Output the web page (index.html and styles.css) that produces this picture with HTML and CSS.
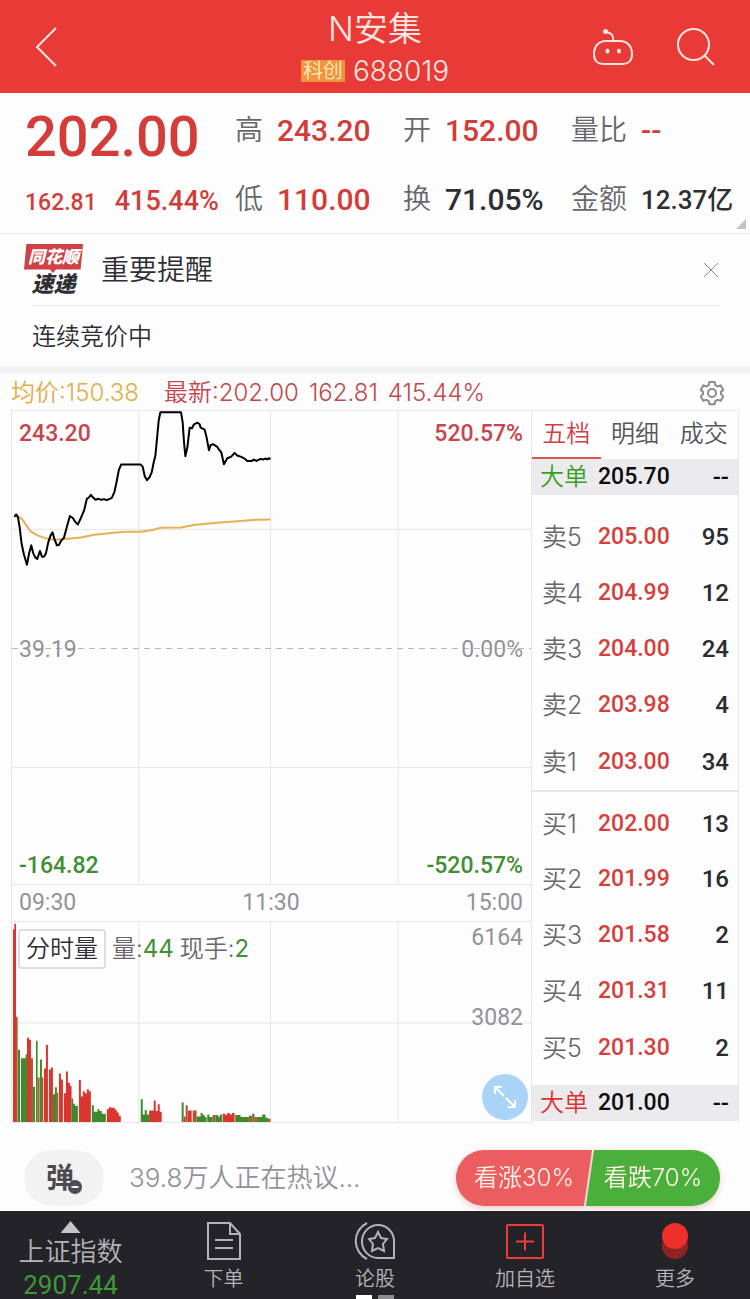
FILE: index.html
```html
<!DOCTYPE html>
<html lang="zh-CN">
<head>
<meta charset="utf-8">
<meta name="viewport" content="width=device-width, initial-scale=1">
<title>N安集 688019</title>
<link rel="stylesheet" href="styles.css">
</head>
<body>
<header class="topbar">
  <button class="icon-btn back" aria-label="返回">
    <svg width="24" height="42" viewBox="0 0 24 42"><path d="M22 2 3 21l19 19"/></svg>
  </button>
  <div class="heading">
    <h1>N安集</h1>
    <p class="code"><span class="board">科创</span>688019</p>
  </div>
  <div class="actions">
    <button class="icon-btn" aria-label="助手">
      <svg width="42" height="38" viewBox="0 0 42 38"><path d="M14 13h14c7 0 12 5 12 13 0 7-4 10-9 10H11c-5 0-9-3-9-10 0-8 5-13 12-13z"/><path d="M21 13c1-5-1-8-7-9"/><circle class="dot" cx="13.500" cy="3.500" r="2.500"/><ellipse class="dot" cx="15.500" cy="23" rx="2" ry="2.600"/><ellipse class="dot" cx="27" cy="23" rx="2" ry="2.600"/></svg>
    </button>
    <button class="icon-btn" aria-label="搜索">
      <svg width="40" height="40" viewBox="0 0 40 40"><circle cx="17.500" cy="17.500" r="15.500"/><path d="m28 28 10 10"/></svg>
    </button>
  </div>
</header>

<main>
  <section class="quote">
    <div class="last">
      <strong class="price">202.00</strong>
      <p class="change"><span>162.81</span><span class="pct">415.44%</span></p>
    </div>
    <dl class="stats">
      <div><dt>高</dt><dd class="up">243.20</dd></div>
      <div><dt>开</dt><dd class="up">152.00</dd></div>
      <div><dt>量比</dt><dd class="up">--</dd></div>
      <div><dt>低</dt><dd class="up">110.00</dd></div>
      <div><dt>换</dt><dd>71.05%</dd></div>
      <div><dt>金额</dt><dd class="amount">12.37亿</dd></div>
    </dl>
    <span class="corner"></span>
  </section>

  <section class="notice">
    <div class="notice-head">
      <div class="brand"><span class="brand-top">同花顺</span><span class="brand-bottom">速递</span></div>
      <h2>重要提醒</h2>
      <button class="icon-btn close" aria-label="关闭">
        <svg width="18" height="18" viewBox="0 0 18 18"><path d="m2 2 14 14M16 2 2 16"/></svg>
      </button>
    </div>
    <p class="notice-body">连续竞价中</p>
  </section>

  <section class="market">
    <div class="legend">
      <span class="avg">均价:150.38</span>
      <span class="latest">最新:202.00</span>
      <span class="latest">162.81</span>
      <span class="latest">415.44%</span>
      <button class="icon-btn gear" aria-label="设置">
        <svg width="26" height="26" viewBox="0 0 26 26"><path d="M10.500 2h5l.8 3 2.400 1.400 3-.9 2.500 4.300-2.200 2.200v2.200l2.200 2.200-2.500 4.300-3-.9-2.400 1.400-.8 3h-5l-.8-3-2.400-1.400-3 .9-2.500-4.300L4 14.200V12L1.800 9.800l2.500-4.300 3 .9L9.700 5z"/><circle cx="13" cy="13" r="4"/></svg>
      </button>
    </div>

    <div class="board-row">
      <div class="charts">
        <div class="plot price-plot">
          <svg viewBox="33 30 1560 1422" preserveAspectRatio="none" aria-hidden="true">
            <path class="grid" d="M414 30V1452M810 30V1452M1194 30V1452M33 386H1593M33 1102H1593"/>
            <path class="zero" d="M33 744H1593"/>
            <path class="avg-line" d="M40 344 52 346 64 356 76 374 90 393 110 404 135 413 160 417 195 415 240 410 280 402 340 396 370 393 420 393 455 388 480 381 540 380 580 373 640 367 720 361 770 357 810 356"/>
            <path class="price-line" d="M40 348 46 341 51 350 56 380 62 430 69 462 78 492 84 460 91 434 97 458 103 470 109 475 117 451 123 468 129 468 135 458 142 425 149 404 155 395 160 414 168 434 174 433 182 418 189 412 199 374 207 346 215 351 224 364 231 371 239 354 250 328 258 294 264 290 270 282 277 290 284 297 293 294 301 297 310 295 318 298 333 291 341 273 347 245 354 208 361 191H420L426 198 432 226 439 238 447 228 453 214 459 184 464 164 468 122 474 58 479 34H541L546 64 550 124 554 166 560 140 567 80 574 82 580 70 590 65 597 70 600 80 612 86 618 110 625 148 630 132 638 130 650 138 655 146 662 154 670 190 680 172 692 167 702 156 710 164 722 168 732 173 740 180 754 180 760 176 768 180 780 174 788 176 794 173 800 175 806 172 810 175"/>
          </svg>
          <div class="scale price-scale">
            <p class="rise"><span>243.20</span><span>520.57%</span></p>
            <p class="flat"><span>39.19</span><span>0.00%</span></p>
            <p class="fall"><span>-164.82</span><span>-520.57%</span></p>
          </div>
        </div>
        <p class="times"><span>09:30</span><span>11:30</span><span>15:00</span></p>
        <div class="plot volume-plot">
          <svg viewBox="33 213 1560 606" preserveAspectRatio="none" aria-hidden="true">
            <path class="grid" d="M414 213V819M810 213V819M1194 213V819M33 519H1593"/>
            <path class="bar-up" d="M36 819V235h4v-17h5V819zM78 819V564h6v6h6V819zM129 819V657h6v-71h6V819zM144 819v-159h6v-6h6V819zM174 819V672h6v18h6V819zM189 819v-87h6v-66h6v34h6v10h5V819zM234 819V692h6v50h6v-16h6v6h6v-12h6v6h6v93zM318 819v-39h6v-6h6v2h12v6h6v8h6v10h6v19zM445 819v-35h14v-30h6v32h6v-21h6v23h6v31zM549 819v-17h6v17zM561 819v-35h12v35zM666 819v-25h8v4h6v-6h8v4h6v-4h8v27zM803 819v-10h7v10z"/>
            <path class="bar-down" d="M51 819V600h6v219zM60 819V626h14v-12h4v205zM96 819V712h6v107zM105 819V573h5v246zM117 819V630h6v189zM156 819v-84h6v-21h6v105zM212 819v-71h5v16h5v6h9v49zM273 819v-51h6v20h11v-8h6v6h7v8h12v25zM420 819v-69h6v46h6v-13h6v13h7v23zM543 819v-59h6v59zM588 819v-17h12v-10h6v6h6v6h6v15zM620 819v-23h6v8h10v15zM644 819v-21h8v4h6v-6h6v23zM704 819v-21h16v6h25v15zM755 819v-25h7v25zM770 819v-15h15v-8h10v10h8v13z"/>
            <path class="bar-mixed" d="M45 819V500h5v319zM90 819V626h6v193zM110 819V684h6v135zM123 819V684h4v135zM168 819v-89h4v89zM555 819v-51h6v51zM576 819v-35h12v35zM636 819v-21h8v21zM745 819v-19h10v19zM762 819v-15h8v15z"/>
          </svg>
          <div class="scale volume-scale">
            <p><span>6164</span></p>
            <p><span>3082</span></p>
          </div>
          <div class="volume-info">
            <button class="indicator">分时量</button>
            <span>量:<b>44</b></span>
            <span>现手:<b>2</b></span>
          </div>
          <button class="expand" aria-label="全屏">
            <svg width="24" height="24" viewBox="0 0 24 24"><path d="M2 9V2h7M2 2l9 9M22 15v7h-7M22 22l-9-9"/></svg>
          </button>
        </div>
      </div>

      <aside class="depth">
        <div class="tabs" role="tablist">
          <button class="tab active" role="tab" aria-selected="true">五档</button>
          <button class="tab" role="tab" aria-selected="false">明细</button>
          <button class="tab" role="tab" aria-selected="false">成交</button>
        </div>
        <table class="orders">
          <tbody class="block"><tr><th class="green">大单</th><td>205.70</td><td>--</td></tr></tbody>
          <tbody class="asks">
            <tr><th>卖5</th><td>205.00</td><td>95</td></tr>
            <tr><th>卖4</th><td>204.99</td><td>12</td></tr>
            <tr><th>卖3</th><td>204.00</td><td>24</td></tr>
            <tr><th>卖2</th><td>203.98</td><td>4</td></tr>
            <tr><th>卖1</th><td>203.00</td><td>34</td></tr>
          </tbody>
          <tbody class="bids">
            <tr><th>买1</th><td>202.00</td><td>13</td></tr>
            <tr><th>买2</th><td>201.99</td><td>16</td></tr>
            <tr><th>买3</th><td>201.58</td><td>2</td></tr>
            <tr><th>买4</th><td>201.31</td><td>11</td></tr>
            <tr><th>买5</th><td>201.30</td><td>2</td></tr>
          </tbody>
          <tbody class="block"><tr><th class="red">大单</th><td>201.00</td><td>--</td></tr></tbody>
        </table>
      </aside>
    </div>
  </section>

  <section class="talk">
    <button class="barrage" aria-label="弹幕">弹<span class="minus"></span></button>
    <a class="topic" href="#talk">39.8万人正在热议...</a>
    <div class="vote">
      <button class="vote-up">看涨30%</button>
      <button class="vote-down">看跌70%</button>
    </div>
  </section>
</main>

<nav class="bottom-nav">
  <a class="index" href="#index"><span class="caret"></span><span class="index-name">上证指数</span><span class="index-value">2907.44</span></a>
  <a href="#order">
    <svg width="36" height="40" viewBox="0 0 36 40"><path d="M2 2h22l10 11v25H2zM24 2v11h10M9 19h18M9 27h18"/></svg>
    <span>下单</span>
  </a>
  <a href="#forum">
    <svg width="42" height="40" viewBox="0 0 42 40"><path d="M24 4a16 16 0 0 1 16 16v17H24a16 16.500 0 0 1 0-33zM13 2a20 20 0 0 0 0 36"/><path d="m24 11 3 6 6 1-4 5 1 7-6-3-6 3 1-7-4-5 6-1z"/></svg>
    <span>论股</span>
  </a>
  <a href="#add">
    <svg class="add" width="40" height="40" viewBox="0 0 40 40"><rect x="2" y="4" width="36" height="33" rx="1"/><path d="M11 20.500h18M20 11.500v18"/></svg>
    <span>加自选</span>
  </a>
  <a href="#more">
    <svg class="more" width="28" height="40" viewBox="0 0 28 40"><circle class="more-shade" cx="14" cy="25" r="13"/><circle class="more-top" cx="14" cy="15" r="13"/></svg>
    <span>更多</span>
  </a>
  <span class="pager"><i></i><i></i></span>
</nav>
</body>
</html>
```
FILE: styles.css
```css
* { box-sizing: border-box; margin: 0; padding: 0; }

:root {
  --din: Roboto, "Noto Sans CJK SC", sans-serif;
  --red: #d33c38;
  --green: #3f8f35;
  --line: #e6e6e8;
}

body {
  background: #fdfdfd;
  color: #2e2e33;
  font-family: Inter, "Noto Sans CJK SC", sans-serif;
  font-weight: 350;
  line-height: 1;
}

button { border: 0; background: none; color: inherit; font: inherit; cursor: pointer; }
a { color: inherit; text-decoration: none; }
svg { display: block; fill: none; stroke: currentColor; stroke-width: 2; }

.icon-btn { display: flex; align-items: center; justify-content: center; }

/* Title bar */
.topbar {
  display: grid;
  grid-template-columns: 1fr auto 1fr;
  align-items: center;
  height: 93px;
  padding: 0 34px;
  background: #e83b38;
  color: #ffe6e0;
}
.back { justify-self: start; }
.heading { display: flex; flex-direction: column; align-items: center; gap: 8px; }
.heading h1 { font-size: 34px; line-height: 40px; font-weight: 350; }
.code { display: flex; align-items: center; gap: 8px; font-size: 28px; line-height: 28px; }
.board { padding: 0 2px; background: #f4933c; color: #ffeec4; font-size: 20px; line-height: 22px; }
.actions { display: flex; align-items: center; justify-self: end; gap: 42px; }
.dot { fill: currentColor; stroke: none; }

/* Quote summary */
.quote {
  position: relative;
  display: flex;
  height: 141px;
  padding: 10px 0 10px 25px;
  border-bottom: 1px solid var(--line);
  font-family: var(--din);
}
.last { flex: 0 0 210px; color: var(--red); }
.price { display: block; font-size: 56px; line-height: 68px; font-weight: 500; }
.change { display: flex; align-items: baseline; gap: 18px; padding-top: 12px; font-size: 23px; line-height: 36px; font-weight: 500; }
.pct { font-size: 27px; }
.stats { flex: 1; display: grid; grid-template-columns: 168px 168px 1fr; grid-template-rows: 44px 69px; align-items: end; }
.stats div { display: flex; align-items: center; gap: 14px; height: 32px; white-space: nowrap; }
.stats dt { color: #67676c; font-size: 28px; line-height: 32px; }
.stats dd { font-size: 30px; line-height: 32px; font-weight: 500; }
.stats .amount { font-size: 26px; }
.stats .up { color: var(--red); }
.corner {
  position: absolute;
  right: 4px;
  bottom: 4px;
  width: 10px;
  height: 10px;
  background: #c2c2c6;
  clip-path: polygon(100% 0, 100% 100%, 0 100%);
}

/* Notice */
.notice { padding: 0 30px 0 24px; border-bottom: 8px solid #f3f3f5; }
.notice-head { display: flex; align-items: center; gap: 18px; height: 71px; }
.notice h2 { flex: 1; font-size: 28px; line-height: 36px; font-weight: 350; }
.brand { display: flex; flex-direction: column; align-items: center; width: 59px; font-style: italic; font-weight: 900; }
.brand-top { width: 100%; height: 29px; background: #cf4145; color: #fff; font-size: 17px; line-height: 26px; text-align: center; clip-path: polygon(4% 0, 100% 0, 96% 88%, 54% 88%, 49% 100%, 44% 88%, 0 88%); }
.brand-bottom { font-size: 22px; line-height: 22px; }
.close { color: #8b8b90; }
.close svg { stroke-width: 1; }
.notice-body { margin-left: 8px; padding: 15px 0 13px; border-top: 1px solid var(--line); font-size: 24px; line-height: 32px; }

/* Chart and order book */
.market { padding: 0 11px; }
.legend { display: flex; align-items: center; gap: 10px; height: 36px; padding: 2px 14px 0 0; font-size: 24px; }
.avg { margin-right: 15px; color: #dfae4a; }
.latest { color: #c4474c; }
.gear { margin-left: auto; color: #8b8b90; }
.board-row { display: flex; border: 1px solid var(--line); border-width: 1px 0 0 1px; }
.charts { flex: 1; min-width: 0; }
.plot { position: relative; display: grid; border-bottom: 1px solid var(--line); }
.plot > * { grid-area: 1 / 1; }
.plot svg { width: 100%; height: 100%; }
.plot path { vector-effect: non-scaling-stroke; }
.price-plot { height: 474px; }
.volume-plot { height: 202px; border-top: 1px solid var(--line); }
.grid { stroke: var(--line); stroke-width: 1; }
.zero { stroke: #b9b6bf; stroke-width: 1; stroke-dasharray: 6 5; }
.avg-line { stroke: #e8b053; }
.price-line { stroke: #000; stroke-linejoin: round; }
.bar-up { fill: #d8362f; stroke: none; }
.bar-down { fill: #3f8a2c; stroke: none; }
.bar-mixed { fill: #a85a30; stroke: none; }
.scale { display: flex; flex-direction: column; justify-content: space-between; padding: 10px 8px 5px 7px; font: 500 23px/26px var(--din); }
.scale p { display: flex; justify-content: space-between; }
.rise { color: #c8454d; }
.fall { color: var(--green); }
.flat, .times, .volume-scale { color: #929298; }
.times { display: flex; justify-content: space-between; padding: 0 8px 0 7px; font: 400 23px/36px var(--din); }
.scale .flat, .volume-scale { font-weight: 400; }
.volume-scale { justify-content: flex-start; gap: 54px; padding-top: 3px; }
.volume-scale p { justify-content: flex-end; }
.volume-info { display: flex; align-items: center; align-self: start; justify-self: start; gap: 6px; padding: 7px 6px; color: #67676c; font-size: 24px; }
.volume-info b { color: var(--green); font-weight: 400; }
.indicator { height: 40px; padding: 0 6px; border: 2px solid #dedee0; border-radius: 4px; background: #fff; color: #2e2e33; }
.expand {
  position: absolute;
  right: 3px;
  bottom: 2px;
  display: flex;
  align-items: center;
  justify-content: center;
  width: 46px;
  height: 46px;
  border-radius: 50%;
  background: #a9d4f8;
  color: #fff;
}
.expand svg { width: 24px; height: 24px; }

.depth { flex: 0 0 208px; border: 1px solid var(--line); border-width: 0 1px; }
.tabs { display: flex; height: 48px; color: #55555a; font-size: 24px; }
.tab { flex: 1; border-bottom: 2px solid transparent; }
.tab.active { border-bottom-color: #dd5450; color: #cf3f46; }
.orders { width: 100%; border-collapse: collapse; }
.orders th { width: 66px; padding-left: 10px; color: #67676c; font: 350 25px/36px Inter, "Noto Sans CJK SC", sans-serif; text-align: left; white-space: nowrap; }
.orders td { font: 500 23px/36px var(--din); color: #2b2b30; }
.orders td:last-child { padding-right: 9px; font-size: 24px; text-align: right; }
.asks tr, .bids tr { height: 56px; }
.asks td:nth-child(2), .bids td:nth-child(2) { color: #d5403d; }
.asks tr:first-child > * { height: 70px; padding-top: 14px; }
.asks tr:last-child > * { height: 58px; border-bottom: 2px solid var(--line); }
.bids tr:first-child > * { height: 60px; padding-top: 4px; }
.bids tr:last-child > * { height: 66px; padding-bottom: 8px; }
.block { background: #ebebed; }
.orders .block th { padding-left: 8px; font-size: 24px; }
.orders .block td { color: #0c0c0e; }
.orders .green { color: #35a01e; }
.orders .red { color: #e02f2c; }

/* Discussion strip */
.talk { display: flex; align-items: center; height: 88px; padding: 22px 30px 0 24px; }
.barrage { display: flex; align-items: center; justify-content: center; width: 80px; height: 56px; border-radius: 28px; background: #f2f2f3; color: #4b4b50; font-size: 28px; font-weight: 700; }
.minus { align-self: flex-end; width: 14px; height: 14px; margin: 0 0 12px -6px; border: solid #4b4b50; border-width: 6px 3px; border-radius: 50%; background: #fff; }
.topic { margin: 0 auto 0 25px; color: #929298; font-size: 26px; line-height: 32px; }
.vote { display: flex; color: #fff3e8; font-size: 24px; filter: drop-shadow(0 2px 3px #e8c8c4); }
.vote button { height: 56px; white-space: nowrap; }
.vote-up { width: 136px; background: #ec5d60; border-radius: 28px 0 0 28px; clip-path: polygon(0 0, 100% 0, 94% 100%, 0 100%); }
.vote-down { width: 134px; margin-left: -6px; background: #4bb03b; border-radius: 0 28px 28px 0; clip-path: polygon(6% 0, 100% 0, 100% 100%, 0 100%); }

/* Bottom navigation */
.bottom-nav { position: relative; display: grid; grid-template-columns: 49fr 51fr 50fr 50fr 50fr; height: 88px; overflow: hidden; background: #242328; color: #b4b4b8; }
.bottom-nav a { display: flex; flex-direction: column; align-items: center; gap: 6px; padding-top: 10px; font-size: 20px; line-height: 24px; }
.bottom-nav .index { gap: 3px; padding: 10px 6px 0 0; }
.caret { width: 20px; height: 12px; background: #c5c5c8; clip-path: polygon(50% 0, 100% 100%, 0 100%); }
.index-name { font-size: 26px; line-height: 32px; }
.index-value { color: #3c9a38; font: 400 26px/28px var(--din); }
.add { color: #ee3c3c; }
.more { stroke: none; }
.more-top { fill: #ee302b; }
.more-shade { fill: #8e2423; }
.pager { position: absolute; left: 50%; bottom: 0; display: flex; gap: 6px; transform: translateX(-50%); }
.pager i { width: 16px; height: 4px; background: #fff; }
.pager i:last-child { background: #8d8d90; }
```
